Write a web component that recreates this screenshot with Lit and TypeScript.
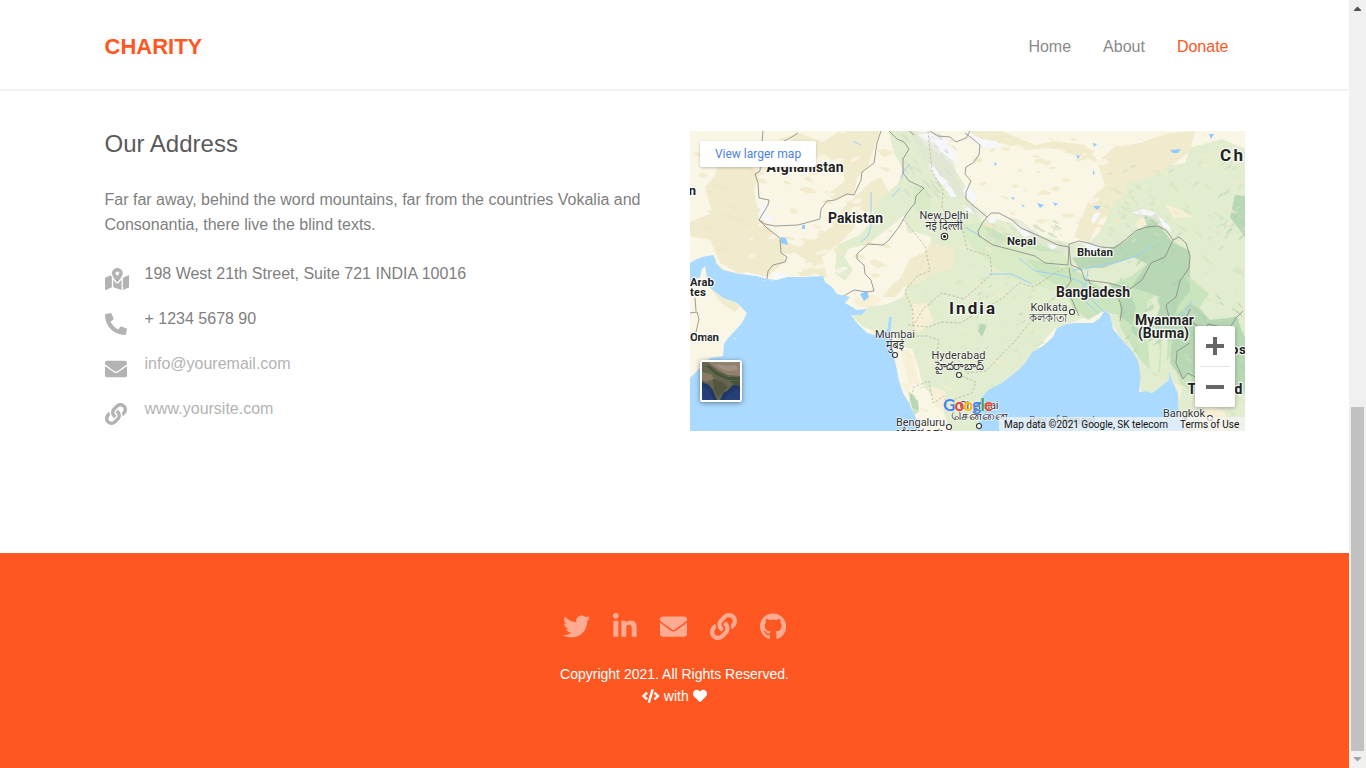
import { LitElement, html, css, svg } from 'lit';
import { customElement } from 'lit/decorators.js';

type Icon = { w: number; d: string };

const ICONS: Record<string, Icon> = {
  map: { w: 576, d: 'M288 0c-69.59 0-126 56.41-126 126 0 56.26 82.35 158.8 113.9 196.02 6.39 7.54 17.82 7.54 24.2 0C331.65 284.8 414 182.26 414 126 414 56.41 357.59 0 288 0zm0 168c-23.2 0-42-18.8-42-42s18.8-42 42-42 42 18.8 42 42-18.8 42-42 42zM20.12 215.95A32.006 32.006 0 0 0 0 245.66v250.32c0 11.32 11.43 19.06 21.94 14.86L160 448V214.92c-8.84-15.98-16.07-31.54-21.25-46.42L20.12 215.95zM288 359.67c-14.07 0-27.38-6.18-36.51-16.96-19.66-23.2-40.57-49.62-59.49-76.72v182l192 64V266c-18.92 27.09-39.82 53.52-59.49 76.72-9.13 10.77-22.44 16.95-36.51 16.95zm266.06-198.51L416 224v288l139.88-55.95A31.996 31.996 0 0 0 576 426.34V176.02c0-11.32-11.43-19.06-21.94-14.86z' },
  phone: { w: 512, d: 'M497.39 361.8l-112-48a24 24 0 0 0-28 6.9l-49.6 60.6A370.66 370.66 0 0 1 130.6 204.11l60.6-49.6a23.94 23.94 0 0 0 6.9-28l-48-112A24.16 24.16 0 0 0 122.6.61l-104 24A24 24 0 0 0 0 48c0 256.5 207.9 464 464 464a24 24 0 0 0 23.4-18.6l24-104a24.29 24.29 0 0 0-14.01-27.6z' },
  envelope: { w: 512, d: 'M502.3 190.8c3.9-3.1 9.7-.2 9.7 4.7V400c0 26.5-21.5 48-48 48H48c-26.5 0-48-21.5-48-48V195.6c0-5 5.7-7.8 9.7-4.7 22.4 17.4 52.1 39.5 154.1 113.6 21.1 15.4 56.7 47.8 92.2 47.6 35.7.3 72-32.8 92.3-47.6 102-74.1 131.6-96.3 154-113.7zM256 320c23.2.4 56.6-29.2 73.4-41.4 132.7-96.3 142.8-104.7 173.4-128.7 5.8-4.5 9.2-11.5 9.2-18.9v-19c0-26.5-21.5-48-48-48H48c-26.5 0-48 21.5-48 48v19c0 7.4 3.4 14.3 9.2 18.9 30.6 23.9 40.7 32.4 173.4 128.7 16.8 12.2 50.2 41.8 73.4 41.4z' },
  link: { w: 512, d: 'M326.612 185.391c59.747 59.809 58.927 155.698.36 214.59-.11.12-.24.25-.36.37l-67.2 67.2c-59.27 59.27-155.699 59.262-214.96 0-59.27-59.26-59.27-155.7 0-214.96l37.106-37.106c9.84-9.84 26.786-3.3 27.294 10.606.648 17.722 3.826 35.527 9.69 52.721 1.986 5.822.567 12.262-3.783 16.612l-13.087 13.087c-28.026 28.026-28.905 73.66-1.155 101.96 28.024 28.579 74.086 28.749 102.325.51l67.2-67.19c28.191-28.191 28.073-73.757 0-101.83-3.701-3.694-7.429-6.564-10.341-8.569a16.037 16.037 0 0 1-6.947-12.606c-.396-10.567 3.348-21.456 11.698-29.806l21.054-21.055c5.521-5.521 14.182-6.199 20.584-1.731a152.482 152.482 0 0 1 20.522 17.197zM467.547 44.449c-59.261-59.262-155.69-59.27-214.96 0l-67.2 67.2c-.12.12-.25.25-.36.37-58.566 58.892-59.387 154.781.36 214.59a152.454 152.454 0 0 0 20.521 17.196c6.402 4.468 15.064 3.789 20.584-1.731l21.054-21.055c8.35-8.35 12.094-19.239 11.698-29.806a16.037 16.037 0 0 0-6.947-12.606c-2.912-2.005-6.64-4.875-10.341-8.569-28.073-28.073-28.191-73.639 0-101.83l67.2-67.19c28.239-28.239 74.3-28.069 102.325.51 27.75 28.3 26.872 73.934-1.155 101.96l-13.087 13.087c-4.35 4.35-5.769 10.79-3.783 16.612 5.864 17.194 9.042 34.999 9.69 52.721.509 13.906 17.454 20.446 27.294 10.606l37.106-37.106c59.271-59.259 59.271-155.699.001-214.959z' },
  twitter: { w: 512, d: 'M459.37 151.716c.325 4.548.325 9.097.325 13.645 0 138.72-105.583 298.558-298.558 298.558-59.452 0-114.68-17.219-161.137-47.106 8.447.974 16.568 1.299 25.34 1.299 49.055 0 94.213-16.568 130.274-44.832-46.132-.975-84.792-31.188-98.112-72.772 6.498.974 12.995 1.624 19.818 1.624 9.421 0 18.843-1.3 27.614-3.573-48.081-9.747-84.143-51.98-84.143-102.985v-1.299c13.969 7.797 30.214 12.67 47.431 13.319-28.264-18.843-46.781-51.005-46.781-87.391 0-19.492 5.197-37.36 14.294-52.954 51.655 63.675 129.3 105.258 216.365 109.807-1.624-7.797-2.599-15.918-2.599-24.04 0-57.828 46.782-104.934 104.934-104.934 30.213 0 57.502 12.67 76.67 33.137 23.715-4.548 46.456-13.32 66.599-25.34-7.798 24.366-24.366 44.833-46.132 57.827 21.117-2.273 41.584-8.122 60.426-16.243-14.292 20.791-32.161 39.308-52.628 54.253z' },
  linkedin: { w: 448, d: 'M100.28 448H7.4V148.9h92.88zM53.79 108.1C24.09 108.1 0 83.5 0 53.8a53.79 53.79 0 0 1 107.58 0c0 29.7-24.1 54.3-53.79 54.3zM447.9 448h-92.68V302.4c0-34.7-.7-79.2-48.29-79.2-48.29 0-55.69 37.7-55.69 76.7V448h-92.78V148.9h89.08v40.8h1.3c12.4-23.5 42.69-48.3 87.88-48.3 94 0 111.28 61.9 111.28 142.3V448z' },
  github: { w: 496, d: 'M165.9 397.4c0 2-2.3 3.6-5.2 3.6-3.3.3-5.6-1.3-5.6-3.6 0-2 2.3-3.6 5.2-3.6 3-.3 5.6 1.3 5.6 3.6zm-31.1-4.5c-.7 2 1.3 4.3 4.3 4.9 2.6 1 5.6 0 6.2-2s-1.3-4.3-4.3-5.2c-2.6-.7-5.5.3-6.2 2.3zm44.2-1.7c-2.9.7-4.9 2.6-4.6 4.9.3 2 2.9 3.3 5.9 2.6 2.9-.7 4.9-2.6 4.6-4.6-.3-1.9-3-3.2-5.9-2.9zM244.8 8C106.1 8 0 113.3 0 252c0 110.9 69.8 205.8 169.5 239.2 12.8 2.3 17.3-5.6 17.3-12.1 0-6.2-.3-40.4-.3-61.4 0 0-70 15-84.7-29.8 0 0-11.4-29.1-27.8-36.6 0 0-22.9-15.7 1.6-15.4 0 0 24.9 2 38.6 25.8 21.9 38.6 58.6 27.5 72.9 20.9 2.3-16 8.8-27.1 16-33.7-55.9-6.2-112.3-14.3-112.3-110.5 0-27.5 7.6-41.3 23.6-58.9-2.6-6.5-11.1-33.3 2.6-67.9 20.9-6.5 69 27 69 27 20-5.6 41.5-8.5 62.8-8.5s42.8 2.9 62.8 8.5c0 0 48.1-33.6 69-27 13.7 34.7 5.2 61.4 2.6 67.9 16 17.7 25.8 31.5 25.8 58.9 0 96.5-58.9 104.2-114.8 110.5 9.2 7.9 17 22.9 17 46.4 0 33.7-.3 75.4-.3 83.6 0 6.5 4.6 14.4 17.3 12.1C428.2 457.8 496 362.9 496 252 496 113.3 383.5 8 244.8 8z' },
  code: { w: 640, d: 'M278.9 511.5l-61-17.7c-6.4-1.8-10-8.5-8.2-14.9L346.2 8.7c1.8-6.4 8.5-10 14.9-8.2l61 17.7c6.4 1.8 10 8.5 8.2 14.9L293.8 503.3c-1.9 6.4-8.5 10.1-14.9 8.2zm-114-112.2l43.5-46.4c4.6-4.9 4.3-12.7-.8-17.2L117 256l90.6-79.7c5.1-4.5 5.5-12.3.8-17.2l-43.5-46.4c-4.5-4.8-12.1-5.1-17-.5L3.8 247.2c-5.1 4.7-5.1 12.8 0 17.5l144.1 135.1c4.9 4.6 12.5 4.4 17-.5zm327.2.6l144.1-135.1c5.1-4.7 5.1-12.8 0-17.5L492.1 112.1c-4.8-4.5-12.4-4.3-17 .5L431.6 159c-4.6 4.9-4.3 12.7.8 17.2L523 256l-90.6 79.7c-5.1 4.5-5.5 12.3-.8 17.2l43.5 46.4c4.5 4.9 12.1 5.1 17 .6z' },
  heart: { w: 512, d: 'M462.3 62.6C407.5 15.9 326 24.3 275.7 76.2L256 96.5l-19.7-20.3C186.1 24.3 104.5 15.9 49.7 62.6c-62.8 53.6-66.1 149.8-9.9 207.9l193.5 199.8c12.5 12.9 32.8 12.9 45.3 0l193.5-199.8c56.3-58.1 53-154.3-9.8-207.9z' },
};

const icon = (name: string, size: number) => {
  const i = ICONS[name];
  return html`<svg class="icon" width=${(i.w / 512) * size} height=${size} viewBox="0 0 ${i.w} 512" fill="currentColor"><path d=${i.d}></path></svg>`;
};

const MAINLAND = 'M0 0H555V300H495L489 282 488 262 482 249 479 239 479 249 475 252 462 262 456 260 449 261 451 246 448 229 440 217 434 211 428 204 423 198 422 192 420 184 415 179 410 187 403 192 385 192 376 193 367 197 363 206 353 215 342 221 335 232 328 239 313 251 298 259 290 268 289 278 288 300H230L227 289 222 279 219 272 213 262 209 250 207 239 204 226 203 216 201 199 202 186 199 185 197 199 185 204 177 202 167 192 161 184 172 184 177 178 167 179 155 172 160 166 147 163 142 156 135 151 133 145 115 146 97 146 87 149 77 148 67 145 50 143 33 139 26 132 25 127 23 124 12 126 5 129 0 132Z';
const ARABIA = 'M0 152L10 146 12 138 15 135 17 146 19 153 20 157 33 167 47 172 57 182 52 192 43 202 38 207 34 213 33 225 20 227 10 237 0 247Z';

// Small deterministic generator for terrain flecks
const rng = (seed: number) => () => {
  seed = (seed * 1664525 + 1013904223) >>> 0;
  return seed / 4294967296;
};
const flecks = (seed: number, n: number, x: number, y: number, w: number, h: number, s: number, tilt = 0.2) => {
  const r = rng(seed);
  let d = '';
  for (let k = 0; k < n; k++) {
    const cx = x + r() * w, cy = y + r() * h, len = s * (0.4 + r());
    for (let j = 0; j < 7; j++) {
      const a = (j / 7) * Math.PI * 2, q = len * (0.5 + r() * 0.7);
      const px = Math.cos(a) * q, py = Math.sin(a) * q * 0.42;
      d += `${j ? 'L' : 'M'}${(cx + px).toFixed(1)} ${(cy + py + px * tilt).toFixed(1)}`;
    }
    d += 'Z';
  }
  return d;
};

const BORDERS = [
  'M73 0L72 12 70 40 65 43 68 52 69 67 79 69 78 74 69 89 75 93 85 95 108 94 130 88 131 78 137 70 145 69 157 63 164 64 171 49 172 41 184 32 187 12 191 0',
  'M69 89L77 97 90 107 91 122 97 126 95 131 83 134 78 140 77 148',
  'M199 0L207 8 214 11 219 18 213 28 213 42 219 50 234 57 226 65 225 72 217 82 209 96 199 109 193 114 178 113 167 123 167 128 174 134 175 143 181 149 184 160 177 161 164 159 152 166',
  'M275 2L283 8 290 14 289 24 283 32 276 36 275 43 281 50 276 61 276 68 285 76 297 86 293 91 288 100 289 105 303 114 330 121 345 125 355 132 378 134 379 116 368 114 347 104 331 97 322 89 309 82 301 82 297 86',
  'M379 116L379 113 389 110 398 112 410 116 424 117 434 110 447 99 457 96 468 95 476 99 483 109 489 106 496 112 500 125 499 137 490 150 486 166 476 174 480 190 495 190 500 178',
  'M379 116L381 134 391 138 395 149 419 152 440 158 452 149 461 132 475 126 483 109',
  'M379 137L381 150 375 158 382 169 389 185M398 148L402 156 428 165 432 178 430 190',
  'M219 0L224 4M240 0L248 5 260 6 266 11 276 7 280 0M500 190L514 199 518 193 527 195 536 203 546 187 553 180M500 212L487 220 486 232 493 248 498 242 507 247M94 10L100 7 108 2M0 182L7 181 9 188 6 201 0 210M6 180L5 167',
];

const DOTTED = [
  'M238 0L242 40 253 60 252 77 272 96 277 118 300 125 302 143 274 168 252 162 233 178 223 195 223 180 215 160 227 145 240 140 235 115 213 88',
  'M218 194L239 196 252 191 270 192 291 180 313 167 329 152 344 156 365 142 379 136',
  'M218 205L237 205 249 209 246 226 252 238 267 227 277 242 296 240 317 218 325 210 341 190 360 170 372 160',
  'M218 278L224 256 239 250 243 272 254 265 259 281M272 245L286 251 282 262 265 268 262 282',
];

const RIVERS = [
  'M181 61L181 95 178 105 171 111 M202 66L210 57M211 48L214 39 220 33 M163 10L171 14',
  'M382 139L395 138 415 133 428 131 446 125 456 119 461 112 M398 139L396 152 390 164 397 172 409 183',
  'M275 96L292 106 M329 127L345 140 370 144 392 151 402 169 414 181 M299 143L322 143 342 153 M492 185L502 170',
];

type Label = { x: number; y: number; t: string; s: number; b?: boolean; w: number };

// Local-script names lie beneath the Latin names so that halos never cut the Latin text
const LOCAL: Label[] = [
  { x: 254, y: 99, t: 'नई दिल्ली', s: 12, w: 37 },
  { x: 358, y: 191, t: 'কলকাতা', s: 12, w: 38 },
  { x: 205, y: 218, t: 'मुंबई', s: 12, w: 18 },
  { x: 269, y: 239, t: 'హైదరాబాద్', s: 12, w: 49 },
  { x: 289.5, y: 289, t: 'சென்னை', s: 12, w: 58 },
  { x: 230, y: 305, t: 'ಬೆಂಗಳೂರು', s: 12, w: 48 },
];

const LABELS: Label[] = [
  { x: 115, y: 41, t: 'Afghanistan', s: 14, b: true, w: 77 },
  { x: 165.5, y: 92, t: 'Pakistan', s: 14, b: true, w: 55 },
  { x: 254, y: 88, t: 'New Delhi', s: 11, w: 49 },
  { x: 331.5, y: 114, t: 'Nepal', s: 11.5, b: true, w: 29 },
  { x: 405, y: 125, t: 'Bhutan', s: 11.5, b: true, w: 36 },
  { x: 541.5, y: 30, t: 'Ch', s: 17, b: true, w: 23 },
  { x: 2.5, y: 64, t: 'n', s: 13, b: true, w: 8 },
  { x: 12, y: 155, t: 'Arab', s: 11.5, b: true, w: 24 },
  { x: 8, y: 165, t: 'tes', s: 11.5, b: true, w: 16 },
  { x: 14.5, y: 210, t: 'Oman', s: 11.5, b: true, w: 29 },
  { x: 282, y: 183, t: 'India', s: 17, b: true, w: 46 },
  { x: 403, y: 166, t: 'Bangladesh', s: 14, b: true, w: 74 },
  { x: 359, y: 180, t: 'Kolkata', s: 11, w: 37 },
  { x: 205, y: 207, t: 'Mumbai', s: 11, w: 40 },
  { x: 268.5, y: 228, t: 'Hyderabad', s: 11, w: 54 },
  { x: 289, y: 278, t: 'Chennai', s: 11, w: 39 },
  { x: 230.5, y: 295, t: 'Bengaluru', s: 11, w: 49 },
  { x: 474.5, y: 194, t: 'Myanmar', s: 14, b: true, w: 59 },
  { x: 473.5, y: 207, t: '(Burma)', s: 14, b: true, w: 51 },
  { x: 494, y: 286, t: 'Bangkok', s: 11, w: 42 },
  { x: 525, y: 263, t: 'Thailand', s: 14, b: true, w: 55 },
  { x: 540.5, y: 223, t: 'Laos', s: 13.5, b: true, w: 31 },
];

@customElement('area-map')
class AreaMap extends LitElement {
  static styles = css`
    :host { display: block; position: relative; width: 555px; height: 300px; overflow: hidden; background: #aadaff; font-family: Roboto, "Liberation Sans", sans-serif; }
    .terrain { display: block; }
    .larger { position: absolute; left: 10px; top: 10px; width: 116px; height: 26px; display: flex; align-items: center; justify-content: center; background: #fff; border-radius: 2px; box-shadow: 0 1px 3px rgba(0,0,0,.22); font-size: 12px; color: #4a7fe6; }
    .sat { position: absolute; left: 10px; top: 229px; width: 38px; height: 38px; border: 2px solid #fff; border-radius: 3px; box-shadow: 0 1px 5px rgba(0,0,0,.45); overflow: hidden; }
    .sat svg { display: block; }
    .zoom { position: absolute; left: 505px; top: 195px; width: 40px; height: 81px; background: #fff; border-radius: 2px; box-shadow: 0 1px 4px rgba(0,0,0,.3); }
    .zoom svg { display: block; }
    .legal { position: absolute; right: 0; bottom: 0; height: 14px; width: 246px; background: rgba(245,245,245,.7); display: flex; align-items: center; font-size: 10px; color: #111; white-space: nowrap; }
    .legal .data { margin-left: 5px; width: 176px; }
    text { text-anchor: middle; paint-order: stroke; stroke: #fff; stroke-opacity: .8; stroke-linejoin: round; fill: #333; font-family: Roboto, "Noto Sans", sans-serif; }
    .big { font-weight: 700; fill: #222; }
    .logo { font-family: Lato, Roboto, sans-serif; font-weight: 700; stroke-width: .6px; }
  `;

  render() {
    return html`
      <svg class="terrain" width="555" height="300" viewBox="0 0 555 300">
        <defs><clipPath id="land"><path d=${MAINLAND}></path><path d=${ARABIA}></path></clipPath></defs>
        <rect width="555" height="300" fill="#aadaff"></rect>
        <g clip-path="url(#land)">
          <rect width="555" height="300" fill="#faf6e6"></rect>
          <path fill="#f1ebcd" d="M30 10L48 18 69 45 64 58 69 84 91 111 95 130 77 146 48 142 30 132 20 109 0 105 0 91 22 82 15 56 25 45ZM88 8L110 2 133 11 150 0 190 0 178 35 167 47 164 62 145 69 136 64 155 50 150 29 120 28ZM181 51L191 46 199 62 183 83 169 78 165 96 152 110 132 126 137 146 110 145 116 129 104 121 130 105 145 93 152 78ZM88 108L110 116 121 108 133 110 112 121 92 123ZM280 0L312 0 326 6 345 14 365 10 395 14 408 30 425 16 450 12 478 2 505 0 500 20 470 44 455 70 410 88 399 112 384 106 391 88 399 69 415 55 409 36 400 28 358 17 335 19 310 12 302 22 292 18ZM20 157L35 163 50 176 45 181 32 173ZM275 55L288 64 279 65Z"></path>
          <path fill="#e2eccf" d="M199 0L226 0 235 14 258 29 279 60 287 84 297 86 322 92 347 104 379 112 399 112 410 100 414 93 425 70 432 68 440 50 458 48 478 35 495 32 500 17 532 8 555 18 555 300 455 300 449 240 415 180 365 197 320 250 290 270 290 300 260 300 252 276 233 255 229 238 222 218 210 215 201 199 190 203 172 195 161 184 179 176 198 173 213 166 218 153 233 138 219 110 214 84 205 92 178 113 158 118 155 127 163 139 155 150 145 142 147 114 170 104 180 92 187 70 208 53 213 38 203 20Z"></path>
          <path fill="#d9eac6" d="M223 55L238 57 241 77 232 85 223 76ZM268 94L290 92 308 101 328 110 352 115 370 118 379 132 385 150 370 162 352 156 330 150 305 136 284 118Z"></path>
          <path fill="#cae5bd" d="M290 92L308 101 328 110 352 115 374 122 350 120 330 114 305 108ZM336 128L360 132 379 140 388 160 372 156 352 146ZM379 134L398 149 428 164 432 185 413 180 398 189 383 177 375 160ZM483 110L500 120 496 143 519 163 507 180 520 189 546 186 555 207 555 264 532 259 518 275 490 252 481 224 466 246 450 228 430 196 433 160 419 154 442 145ZM218 260L225 265 229 280 224 285Z"></path>
          <path fill="#b8d8b5" d="M382 127L402 125 434 111 450 97 470 95 483 112 500 120 500 160 490 172 483 190 477 214 466 202 463 180 448 198 430 186 430 166 419 153 440 158 457 133 443 126 413 137 389 137ZM437 155L446 176 441 200 451 210 462 200 456 179 471 166ZM500 172L510 178 520 189 546 186 555 207 555 260 539 250 520 256 500 240 492 248 480 232 482 211 476 200 486 184ZM545 64L555 65 555 106 540 86ZM220 263L228 270 229 279 222 277ZM454 84L470 91 464 98 451 95ZM290 192L297 194 292 206 288 200Z"></path>
          <path fill="#faf6e6" d="M170 131L178 122 198 121 212 103 226 101 241 106 241 118 219 131 212 149 195 165 184 160 177 150Z"></path>
          <path fill="#f1ebcd" d="M241 110L248 114 265 118 262 138 244 142 228 152 214 156 205 166 192 166 202 154 211 147 219 129 236 120Z"></path>
          <path fill="#f7efd6" d="M211 219L220 219 230 253 219 253ZM240 255L255 260 258 280 245 276ZM223 173L237 172 243 190 229 202 221 192ZM163 168L180 164 192 168 182 176 168 176ZM446 90L454 86 457 94 448 98ZM484 252L492 256 490 270ZM475 73L491 79 503 86 484 87ZM515 275L535 280 538 300 507 300ZM285 272L300 262 294 281Z"></path>
          <path fill="#e2eccf" d="M458 170L466 164 470 176 464 196 470 220 468 244 460 240 458 214 453 200ZM472 196L478 208 476 236 482 240 470 250Z"></path>
          <path fill="#f0e9c8" opacity=".85" d=${flecks(3, 60, 0, 20, 200, 125, 7, 0.2) + flecks(8, 50, 282, 5, 150, 95, 5, 0.05)}></path>
          <path fill="#faf6e6" opacity=".8" d=${flecks(14, 45, 50, 0, 140, 140, 6, -0.3) + flecks(21, 40, 280, 10, 130, 85, 8, 0)}></path>
          <path fill="#f4edcf" opacity=".6" d=${flecks(31, 50, 205, 115, 110, 175, 4.5, 0.3) + flecks(36, 22, 420, 5, 130, 95, 5, 0.4)}></path>
          <path fill="#cfe3bf" opacity=".55" d=${flecks(40, 55, 220, 130, 145, 130, 3, -0.5) + flecks(45, 45, 400, 55, 150, 50, 4, 0.6) + flecks(49, 35, 490, 120, 65, 175, 4, 0.7)}></path>
          <path fill="#acd2ad" opacity=".6" d=${flecks(52, 45, 430, 110, 60, 110, 3.5, -0.8) + flecks(55, 32, 500, 165, 55, 85, 4, 0.9) + flecks(58, 16, 528, 60, 27, 60, 3, -0.9) + flecks(57, 10, 285, 155, 50, 45, 2.5, -0.7)}></path>
          <path fill="#d5dfc4" opacity=".8" d=${flecks(61, 45, 292, 88, 80, 26, 3.5, 0.4) + flecks(68, 32, 213, 2, 48, 64, 4, 0.9) + flecks(73, 40, 405, 30, 150, 88, 3, -0.6)}></path>
          <path fill="#dfe4d3" opacity=".6" d="M221 0L250 2 256 12 262 24 270 56 278 66 269 67 256 55 248 42 235 33 228 18ZM276 70L285 75 297 83 289 89 279 83ZM319 86L330 89 347 101 358 111 373 113 386 117 374 122 360 117 343 109 329 99ZM387 112L404 110 418 116 407 120ZM421 114L431 107 446 99 437 110ZM439 82L449 77 461 80 475 91 482 99 471 96 458 84 446 86Z"></path>
          <path fill="#f6f7fa" d="M227 4L241 2 250 9 254 5 259 17 268 25 266 32 258 26 250 20 245 12 236 9ZM238 33L244 35 250 44 257 50 262 58 267 66 261 66 254 56 245 46ZM276 0L291 8 306 10 312 15 300 18 288 14ZM275 53L283 60 288 68 281 73 274 62ZM71 73L76 71 75 84 82 86 82 91 69 88ZM54 141L70 144 75 149 58 146ZM82 142L92 141 97 146 84 149ZM117 144L126 143 132 146ZM297 88L304 86 307 91 300 92ZM322 92L331 97 342 104 334 106ZM357 113L368 115 362 119ZM391 112L402 113 413 117 400 118ZM441 82L453 78 466 82 461 85 449 83ZM468 85L474 89 480 96 481 101 473 96ZM403 84L408 80 410 83 404 93 401 90ZM272 74L280 77 284 83 276 80Z"></path>
          <path fill="#d8dce0" opacity=".8" d=${flecks(81, 16, 232, 3, 34, 22, 2.2, 0.6) + flecks(86, 12, 242, 36, 20, 28, 2, 0.9) + flecks(90, 12, 445, 79, 32, 14, 1.8, 0.5) + flecks(94, 8, 270, 72, 26, 14, 2, 0.5)}></path>
          <path fill="#8fcbff" d="M91 106L96 107 98 114 91 112ZM112 94L115 94 115 98 112 98ZM170 163L177 160 179 166 174 170ZM347 72L354 74 350 77ZM403 75L411 75 407 79ZM403 39L405 42 403 44ZM386 24L390 25 388 28ZM403 12L407 13 404 16ZM480 19L491 18 488 22 483 22ZM321 66L325 67 323 69ZM363 71L368 73 365 75ZM519 3L524 3 521 8ZM331 73L335 75 333 76ZM304 31L307 33 305 35Z"></path>
          <g fill="none" stroke="#9bd0f8" stroke-width="1">${RIVERS.map((d) => svg`<path d=${d}></path>`)}</g>
          <g fill="none" stroke="#b5b59f" stroke-width=".8" stroke-dasharray="2.5 1.8">${DOTTED.map((d) => svg`<path d=${d}></path>`)}</g>
          <g fill="none" stroke="#858580" stroke-width=".8" stroke-linejoin="round">${BORDERS.map((d) => svg`<path d=${d}></path>`)}</g>
        </g>
        <path fill="#f1eacb" d="M44 208L47 206 45 209ZM72 149L75 149 74 150ZM80 149L84 148 82 150Z"></path>
        ${LOCAL.map((l) => svg`<text x=${l.x} y=${l.y} font-size=${l.s} textLength=${l.w} lengthAdjust="spacingAndGlyphs" stroke-width="1.5">${l.t}</text>`)}
        ${LABELS.map((l) => svg`<text class=${l.b ? 'big' : ''} x=${l.x} y=${l.y} font-size=${l.s} textLength=${l.w} stroke-width=${l.b ? 2.5 : 1.5}>${l.t}</text>`)}
        <text x="372" y="293" font-size="11" fill="#5c8fc4" fill-opacity=".7" textLength="66" stroke-width="0">Bay of Bengal</text>
        <g fill="#fff" stroke="#333" stroke-width="1.100">
          <circle cx="254.500" cy="105.500" r="3.200"></circle><circle cx="382" cy="181" r="2.500"></circle><circle cx="205" cy="224" r="2.500"></circle>
          <circle cx="269" cy="244" r="2.500"></circle><circle cx="259" cy="296" r="2.500"></circle><circle cx="289" cy="295" r="2.500"></circle><circle cx="520" cy="287" r="2.500"></circle>
        </g>
        <circle cx="254.500" cy="105.500" r="1.500" fill="#111"></circle>
        <text class="logo" x="278" y="280" font-size="17" textLength="50"><tspan fill="#4285f4">G</tspan><tspan fill="#ea4335">o</tspan><tspan fill="#fbbc05">o</tspan><tspan fill="#4285f4">g</tspan><tspan fill="#34a853">l</tspan><tspan fill="#ea4335">e</tspan></text>
      </svg>
      <div class="larger">View larger map</div>
      <div class="sat"><svg width="38" height="38" viewBox="0 0 38 38">
        <rect width="38" height="38" fill="#1f3868"></rect>
        <path fill="#66664f" d="M0 0H38V23L32 22 25 29 21 31 18 38H15L11 28 7 23 0 20Z"></path>
        <path fill="#84796a" d="M0 10L8 12 5 20 0 18Z"></path><path fill="#93816f" d="M6 0H38V14L26 13 16 8Z"></path>
        <path fill="#a39281" d="M14 2L24 4 34 3 36 8 26 9 18 6Z"></path>
        <path fill="#8a7c63" d="M3 13L9 12 12 17 6 19Z"></path>
        <path fill="#445539" d="M3 3L8 4 15 10 26 15 38 15V18L26 18 14 13ZM28 19L38 18V24L32 23Z"></path>
        <path fill="#53573f" d="M11 17L21 20 26 25 20 31 16 36 12 28Z"></path>
        <path fill="#263f78" d="M0 24L7 28 12 38H0ZM26 32L34 27 38 31V38H22Z"></path>
      </svg></div>
      <div class="zoom"><svg width="40" height="81" viewBox="0 0 40 81"><path fill="#666" d="M11 18H18V11H22V18H29V22H22V29H18V22H11ZM11 59H29V63H11Z"></path><path fill="#e6e6e6" d="M5 40H35V41H5Z"></path></svg></div>
      <div class="legal"><span class="data">Map data ©2021 Google, SK telecom</span><span>Terms of Use</span></div>
    `;
  }
}

@customElement('app-root')
class AppRoot extends LitElement {
  static styles = css`
    :host { display: flex; width: 1366px; height: 768px; overflow: hidden; background: #fff; font-family: "Liberation Sans", Arial, sans-serif; font-size: 16px; color: #808080; }
    .page { width: 1349px; display: flex; flex-direction: column; }
    .icon { display: block; flex: none; }
    header { box-sizing: border-box; height: 89px; flex: none; padding: 4px 120.500px 0 104.500px; display: flex; align-items: center; justify-content: space-between; box-shadow: 0 1px 3px rgba(0,0,0,.1); }
    .brand { font-size: 22px; line-height: 26px; font-weight: 700; color: #ff5722; }
    nav { display: flex; gap: 32px; color: #8a8a8a; }
    nav .on { color: #ff5722; }
    main { height: 464px; flex: none; box-sizing: border-box; padding: 42px 104px 0 104.500px; display: grid; grid-template-columns: 555px 555px; column-gap: 30.500px; align-items: start; }
    h3 { margin: -1px 0 29px; font-size: 24px; line-height: 28px; font-weight: 400; color: #5a5a5a; }
    p { margin: 0 0 25px; line-height: 25px; }
    ul { margin: 0; padding: 0; list-style: none; }
    li { display: flex; height: 45px; line-height: 24px; }
    .slot { width: 40px; padding-top: 6px; color: #b3b3b3; }
    .soft { color: #b3b3b3; }
    footer { flex: 1; background: #ff5722; color: #fff; font-size: 14px; line-height: 22px; display: flex; flex-direction: column; align-items: center; padding-top: 59.500px; }
    .social { display: flex; gap: 23px; color: rgba(255,255,255,.5); margin-bottom: 23.500px; }
    .made { display: flex; align-items: center; gap: 4px; }
    .bar { width: 17px; background: #f0f0f0; display: flex; flex-direction: column; align-items: center; }
    .bar svg { display: block; flex: none; }
    .space { height: 390px; flex: none; }
    .thumb { width: 13px; height: 344px; background: #c1c1c1; }
  `;

  render() {
    const rows: [string, string, boolean][] = [
      ['map', '198 West 21th Street, Suite 721 INDIA 10016', false],
      ['phone', '+ 1234 5678 90', false],
      ['envelope', 'info@youremail.com', true],
      ['link', 'www.yoursite.com', true],
    ];
    return html`
      <div class="page">
        <header><div class="brand">CHARITY</div><nav><span>Home</span><span>About</span><span class="on">Donate</span></nav></header>
        <main>
          <section>
            <h3>Our Address</h3>
            <p>Far far away, behind the word mountains, far from the countries Vokalia and Consonantia, there live the blind texts.</p>
            <ul>${rows.map(([i, t, soft]) => html`<li><span class="slot">${icon(i, 22)}</span><span class=${soft ? 'soft' : ''}>${t}</span></li>`)}</ul>
          </section>
          <area-map></area-map>
        </main>
        <footer>
          <div class="social">${['twitter', 'linkedin', 'envelope', 'link', 'github'].map((n) => icon(n, 27))}</div>
          <div>Copyright 2021. All Rights Reserved.</div>
          <div class="made">${icon('code', 14)}<span>with</span>${icon('heart', 14)}</div>
        </footer>
      </div>
      <div class="bar">
        <svg width="17" height="17" viewBox="0 0 17 17"><path fill="#505050" d="M5 11V10L8.500 6.500 12 10V11Z"></path></svg>
        <div class="space"></div>
        <div class="thumb"></div>
        <svg width="17" height="17" viewBox="0 0 17 17"><path fill="#a3a3a3" d="M5 6V7L8.500 10.500 12 7V6Z"></path></svg>
      </div>
    `;
  }
}
